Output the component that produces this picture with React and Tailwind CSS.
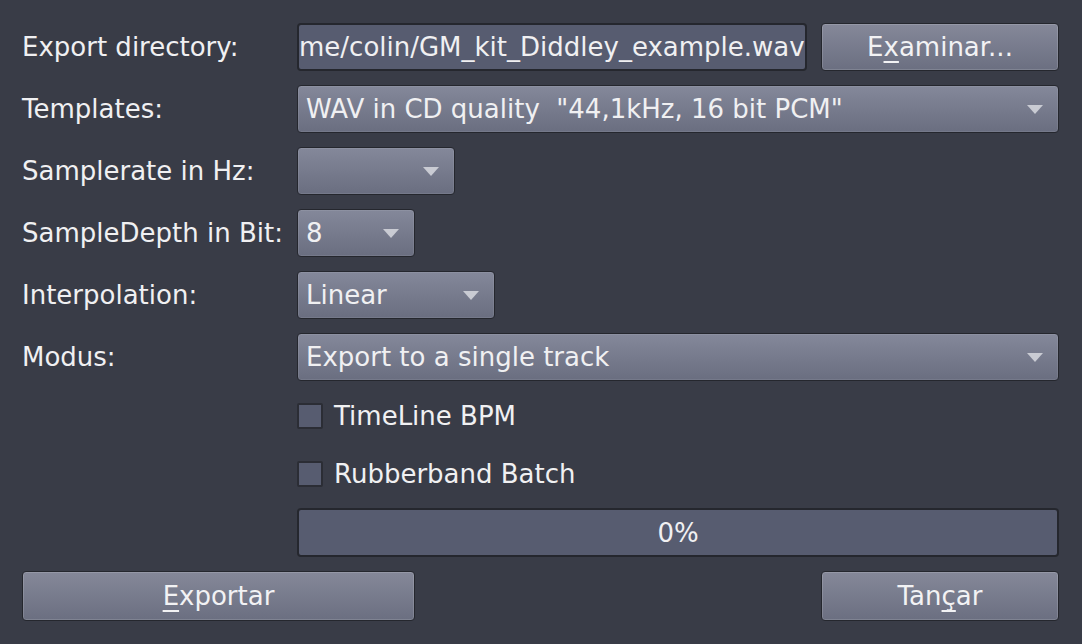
import React from "react";

const font = { fontFamily: '"DejaVu Sans", "Noto Sans", sans-serif' };

function Arrow() {
  return (
    <svg width="16" height="9" viewBox="0 0 16 9" className="shrink-0">
      <path d="M0 0 L16 0 L8 9 Z" fill="#c9cbd3" />
    </svg>
  );
}

function Combo({ value, className = "" }) {
  return (
    <div
      className={`h-12 flex items-center justify-between pl-[8px] pr-[15px] rounded-[4px] border border-[#25272e] bg-gradient-to-b from-[#84889a] to-[#6a6e80] shadow-[inset_0_0_0_1px_rgba(255,255,255,0.08)] ${className}`}
    >
      <span className="whitespace-pre">{value}</span>
      <Arrow />
    </div>
  );
}

function Button({ children, className = "" }) {
  return (
    <button
      className={`flex items-center justify-center rounded-[4px] border border-[#25272e] bg-gradient-to-b from-[#858899] to-[#6b6f81] shadow-[inset_0_0_0_1px_rgba(255,255,255,0.14)] text-[#f2f2f4] ${className}`}
    >
      {children}
    </button>
  );
}

function Check({ label }) {
  return (
    <div className="h-[58px] flex items-center gap-[11px]">
      <div className="w-[26px] h-[26px] rounded-[2px] border-2 border-[#2b2d35] bg-[#575c70]" />
      <span>{label}</span>
    </div>
  );
}

export default function App() {
  const labelCls = "h-12 flex items-center";
  return (
    <div
      style={font}
      className="w-[1082px] h-[644px] bg-[#393c47] text-[#f0f0f2] text-[26px] leading-none pt-[23px] pl-[22px] pr-[23px] overflow-hidden"
    >
      <div className="grid grid-cols-[275px_1fr] gap-y-[14px]">
        <div className={labelCls}>Export directory:</div>
        <div className="flex gap-[14px]">
          <div className="flex-1 h-12 flex items-center overflow-hidden rounded-[4px] border-2 border-[#25272e] bg-[#575c70]">
            <span className="whitespace-nowrap">me/colin/GM_kit_Diddley_example.wav</span>
          </div>
          <Button className="w-[238px] h-12">
            <span>
              E<u className="underline-offset-[5px] decoration-[2px]">x</u>aminar...
            </span>
          </Button>
        </div>

        <div className={labelCls}>Templates:</div>
        <Combo value={'WAV in CD quality  "44,1kHz, 16 bit PCM"'} />

        <div className={labelCls}>Samplerate in Hz:</div>
        <Combo value="" className="w-[158px]" />

        <div className={labelCls}>SampleDepth in Bit:</div>
        <Combo value="8" className="w-[118px]" />

        <div className={labelCls}>Interpolation:</div>
        <Combo value="Linear" className="w-[198px]" />

        <div className={labelCls}>Modus:</div>
        <Combo value="Export to a single track" />
      </div>

      <div className="pl-[275px] mt-[6px]">
        <Check label="TimeLine BPM" />
        <Check label="Rubberband Batch" />
        <div className="mt-[5px] h-[49px] flex items-center justify-center rounded-[4px] border-2 border-[#25272e] bg-[#575c70]">
          0%
        </div>
      </div>

      <div className="mt-[14px] flex justify-between">
        <Button className="w-[393px] h-[50px]">
          <span>
            <u className="underline-offset-[5px] decoration-[2px]">E</u>xportar
          </span>
        </Button>
        <Button className="w-[238px] h-[50px]">
          <span>
            Tan<u className="underline-offset-[5px] decoration-[2px]">ç</u>ar
          </span>
        </Button>
      </div>
    </div>
  );
}
